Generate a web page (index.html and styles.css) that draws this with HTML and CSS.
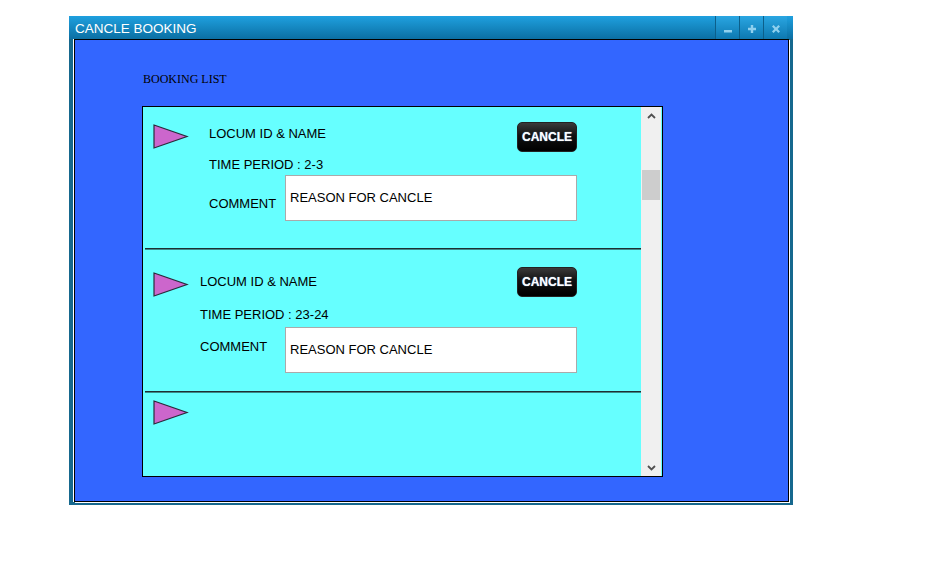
FILE: index.html
```html
<!DOCTYPE html>
<html>
<head>
<meta charset="utf-8">
<link rel="stylesheet" href="styles.css">
</head>
<body>
<div class="window">
  <div class="titlebar">
    <span class="title">CANCLE BOOKING</span>
    <div class="controls">
      <span class="ctrl"><svg width="10" height="10" viewBox="0 0 10 10"><rect x="1" y="6" width="8" height="2.5" fill="#8fd0ee"/></svg></span>
      <span class="ctrl"><svg width="10" height="10" viewBox="0 0 10 10"><path d="M3.8 1h2.4v2.8H9v2.4H6.2V9H3.8V6.2H1V3.8h2.8z" fill="#8fd0ee"/></svg></span>
      <span class="ctrl"><svg width="10" height="10" viewBox="0 0 10 10"><path d="M1 2.6 2.6 1 5 3.4 7.4 1 9 2.6 6.6 5 9 7.4 7.4 9 5 6.6 2.6 9 1 7.4 3.4 5z" fill="#8fd0ee"/></svg></span>
    </div>
  </div>
  <div class="client">
    <div class="heading">BOOKING LIST</div>
    <div class="listbox">
      <div class="items">
        <div class="item item-a">
          <svg class="tri" width="36" height="26" viewBox="0 0 36 26"><polygon points="1,1 34,12.5 1,24" fill="#cc66cc" stroke="#2a2a3a" stroke-width="1.2"/></svg>
          <div class="details">
            <div class="row-top">
              <span class="label lbl-name">LOCUM ID &amp; NAME</span>
              <button class="cbtn">CANCLE</button>
            </div>
            <div class="label period">TIME PERIOD : 2-3</div>
            <div class="row-comment">
              <span class="label comment">COMMENT</span>
              <div class="textbox">REASON FOR CANCLE</div>
            </div>
          </div>
        </div>
        <div class="sep"></div>
        <div class="item item-b">
          <svg class="tri" width="36" height="26" viewBox="0 0 36 26"><polygon points="1,1 34,12.5 1,24" fill="#cc66cc" stroke="#2a2a3a" stroke-width="1.2"/></svg>
          <div class="details">
            <div class="row-top">
              <span class="label lbl-name">LOCUM ID &amp; NAME</span>
              <button class="cbtn">CANCLE</button>
            </div>
            <div class="label period">TIME PERIOD : 23-24</div>
            <div class="row-comment">
              <span class="label comment">COMMENT</span>
              <div class="textbox">REASON FOR CANCLE</div>
            </div>
          </div>
        </div>
        <div class="sep"></div>
        <div class="item item-c">
          <svg class="tri" width="36" height="26" viewBox="0 0 36 26"><polygon points="1,1 34,12.5 1,24" fill="#cc66cc" stroke="#2a2a3a" stroke-width="1.2"/></svg>
        </div>
      </div>
      <div class="scrollbar">
        <div class="arrow"><svg width="9" height="6" viewBox="0 0 9 6"><path d="M1 5 4.5 1.5 8 5" fill="none" stroke="#505050" stroke-width="1.8"/></svg></div>
        <div class="track"><div class="thumb"></div></div>
        <div class="arrow"><svg width="9" height="6" viewBox="0 0 9 6"><path d="M1 1 4.5 4.5 8 1" fill="none" stroke="#505050" stroke-width="1.8"/></svg></div>
      </div>
    </div>
  </div>
</div>
</body>
</html>
```

FILE: styles.css
```css
html, body {
  margin: 0;
  padding: 0;
  background: #ffffff;
}
body {
  font-family: "Liberation Sans", Arial, sans-serif;
}
.window {
  margin: 16px 0 0 69px;
  width: 724px;
  height: 489px;
  box-sizing: border-box;
  background: #16688e;
  display: flex;
  flex-direction: column;
  padding: 0 4px 3px 4px;
}
.titlebar {
  height: 23px;
  margin: 0 -4px;
  padding: 0 6px 0 6px;
  background: linear-gradient(#1fa0df, #0b6fa3);
  display: flex;
  align-items: center;
  justify-content: space-between;
  flex-shrink: 0;
}
.title {
  color: #ffffff;
  font-size: 13.5px;
  padding-top: 2px;
}
.controls {
  display: flex;
  height: 100%;
  align-items: stretch;
}
.ctrl {
  width: 24px;
  display: flex;
  align-items: center;
  justify-content: center;
  background: linear-gradient(#2aa6e2, #0d78b0);
  border-left: 1px solid #0c5f8a;
  padding-top: 3px;
  box-sizing: border-box;
}
.client {
  flex: 1;
  background: #3366ff;
  border: 1px solid #000;
  box-shadow: -1px 0 0 #ffffff, 1px 1px 0 #ffffff;
  margin-left: 1px;
  padding: 0 0 0 67px;
  display: flex;
  flex-direction: column;
}
.heading {
  font-family: "Liberation Serif", "Times New Roman", serif;
  font-size: 12px;
  margin-top: 32px;
  margin-left: 1px;
  height: 34px;
  color: #000;
}
.listbox {
  width: 521px;
  height: 371px;
  box-sizing: border-box;
  border: 1px solid #000;
  background: #66ffff;
  display: flex;
}
.items {
  flex: 1;
  display: flex;
  flex-direction: column;
}
.item {
  display: flex;
  align-items: flex-start;
  padding-left: 10px;
  box-sizing: border-box;
}
.item-a { height: 141px; padding-top: 15px; }
.item-b { height: 141px; padding-top: 17px; }
.item-c { flex: 1; padding-top: 7px; }
.item-a .tri { margin-top: 2px; }
.item-b .tri { margin-top: 5px; }
.tri { flex-shrink: 0; }
.sep {
  height: 1px;
  margin-left: 2px;
  background: #1d2f33;
  border-bottom: 1px solid #3a8a8a;
}
.details {
  display: flex;
  flex-direction: column;
  width: 368px;
}
.item-a .details { margin-left: 20px; }
.item-b .details { margin-left: 11px; width: 377px; }
.label {
  font-size: 13px;
  line-height: 16px;
  color: #000;
}
.row-top {
  display: flex;
  justify-content: space-between;
  align-items: flex-start;
  height: 30px;
}
.item-a .lbl-name { margin-top: 4px; }
.item-b .lbl-name { margin-top: 7px; }
.item-a .period { margin-top: 5px; }
.item-b .period { margin-top: 10px; }
.row-comment {
  display: flex;
  justify-content: space-between;
  align-items: flex-start;
}
.item-a .row-comment { margin-top: 2px; }
.item-b .row-comment { margin-top: 4px; }
.item-a .comment { margin-top: 21px; }
.item-b .comment { margin-top: 12px; }
.textbox {
  width: 292px;
  height: 46px;
  box-sizing: border-box;
  background: #ffffff;
  border: 1px solid #aaaaaa;
  font-size: 13px;
  padding-left: 4px;
  padding-bottom: 2px;
  display: flex;
  align-items: center;
}
.cbtn {
  width: 60px;
  height: 30px;
  border: 1px solid #222;
  border-radius: 5px;
  background: linear-gradient(#3a3a3a 0%, #111 45%, #000 100%);
  color: #ffffff;
  font-family: "Liberation Sans", Arial, sans-serif;
  font-weight: bold;
  font-size: 12px;
  padding: 0;
  text-shadow: 0 0 1px #9cf;
}
.scrollbar {
  width: 20px;
  background: #f0f0f0;
  display: flex;
  flex-direction: column;
  margin-right: 1px;
}
.arrow {
  height: 17px;
  display: flex;
  align-items: center;
  justify-content: center;
}
.track {
  flex: 1;
  padding: 46px 1px 0 1px;
}
.thumb {
  height: 30px;
  background: #cdcdcd;
}
```
